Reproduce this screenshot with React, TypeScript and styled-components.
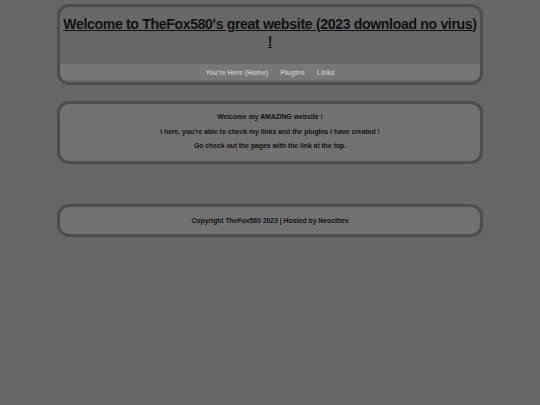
import styled, { createGlobalStyle } from "styled-components";

const GlobalStyle = createGlobalStyle`
  html, body {
    margin: 0;
    padding: 0;
    background: #666666;
    font-family: "Liberation Sans", Arial, sans-serif;
    -webkit-font-smoothing: antialiased;
  }
`;

const Page = styled.div`
  display: flex;
  flex-direction: column;
  align-items: center;
  padding-top: 4px;
`;

const Panel = styled.section<{ $tone?: string; $gap?: number }>`
  box-sizing: border-box;
  width: 426px;
  border: 3px solid #4d4d4d;
  border-radius: 12px;
  background: ${({ $tone }) => $tone || "#717171"};
  margin-bottom: ${({ $gap }) => $gap ?? 16}px;
  overflow: hidden;
  text-align: center;
  color: #111;
`;

const Header = styled(Panel)`
  padding: 9px 0 2px;
`;

const Title = styled.h1`
  margin: 0 0 14px;
  font-size: 14px;
  line-height: 17px;
  letter-spacing: -0.3px;
  font-weight: bold;
  text-decoration: underline;
  color: #111;
`;

const Nav = styled.nav`
  display: flex;
  justify-content: center;
  gap: 12px;
  background: #777777;
  height: 16px;
  align-items: center;
`;

const NavLink = styled.a`
  color: #c4c4c4;
  font-size: 6.8px;
  font-weight: bold;
  text-decoration: none;
`;

const Body = styled(Panel)`
  padding: 6px 0 7px;
`;

const Line = styled.p`
  margin: 0;
  font-size: 6.8px;
  font-weight: bold;
  line-height: 14.5px;
`;

const Footer = styled(Panel)`
  padding: 7px 0 6px;
`;

const App: React.FC = () => {
  return (
    <>
      <GlobalStyle />
      <Page>
        <Header $tone="#676767" $gap={16}>
          <Title>Welcome to TheFox580's great website (2023 download no virus) !</Title>
          <Nav>
            <NavLink href="#">You're Here (Home)</NavLink>
            <NavLink href="#">Plugins</NavLink>
            <NavLink href="#">Links</NavLink>
          </Nav>
        </Header>
        <Body $gap={40}>
          <Line>Welcome my AMAZING website !</Line>
          <Line>I here, you're able to check my links and the plugins I have created !</Line>
          <Line>Go check out the pages with the link at the top.</Line>
        </Body>
        <Footer>
          <Line>Copyright TheFox580 2023 | Hosted by Neocities</Line>
        </Footer>
      </Page>
    </>
  );
};

export default App;
